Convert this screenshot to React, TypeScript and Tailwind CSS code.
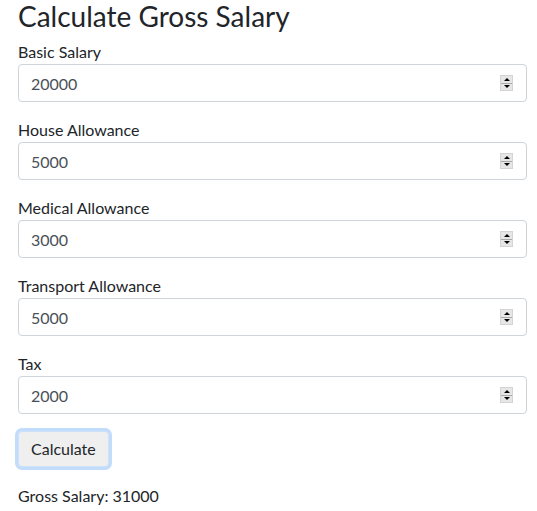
import React, { useState } from "react";

const fields = [
  { label: "Basic Salary", value: "20000" },
  { label: "House Allowance", value: "5000" },
  { label: "Medical Allowance", value: "3000" },
  { label: "Transport Allowance", value: "5000" },
  { label: "Tax", value: "2000" },
];

function Spinner() {
  return (
    <div className="absolute right-[14px] top-1/2 -translate-y-1/2 flex flex-col w-[13px] h-[16px] bg-[#e6e6e6] border border-[#d4d4d4]">
      <div className="flex-1 flex items-center justify-center border-b border-[#a9a9a9]">
        <div className="w-0 h-0 border-l-[3px] border-r-[3px] border-b-[3px] border-l-transparent border-r-transparent border-b-black" />
      </div>
      <div className="flex-1 flex items-center justify-center">
        <div className="w-0 h-0 border-l-[3px] border-r-[3px] border-t-[3px] border-l-transparent border-r-transparent border-t-black" />
      </div>
    </div>
  );
}

export default function App() {
  const [values, setValues] = useState(fields.map((f) => f.value));
  const [total, setTotal] = useState(31000);

  const calc = () => {
    const n = values.map((v) => Number(v) || 0);
    setTotal(n[0] + n[1] + n[2] + n[3] - n[4]);
  };

  return (
    <div className="px-[18px] pr-[10px] text-[#212529] text-base leading-6" style={{ fontFamily: "Lato, sans-serif" }}>
      <h3 className="text-[28px] leading-[32px] font-normal mb-[8px]">Calculate Gross Salary</h3>
      {fields.map((f, i) => (
        <div key={f.label} className="mb-4">
          <label className="block">{f.label}</label>
          <div className="relative">
            <input
              type="text"
              value={values[i]}
              onChange={(e) => {
                const next = [...values];
                next[i] = e.target.value;
                setValues(next);
              }}
              className="w-full h-[38px] px-3 border border-[#ced4da] rounded text-[#495057] bg-white outline-none"
            />
            <Spinner />
          </div>
        </div>
      ))}
      <button
        onClick={calc}
        className="mt-[1px] px-[12px] h-[36px] rounded-[4px] bg-[#efefef] border border-[#cde2f9] ring-[3px] ring-[#c2dcfb]"
      >
        Calculate
      </button>
      <p className="mt-[17px]">Gross Salary: {total}</p>
    </div>
  );
}
